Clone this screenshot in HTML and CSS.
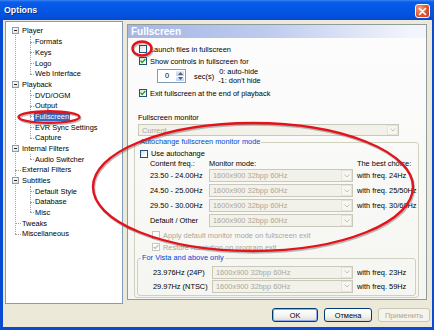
FILE: index.html
```html
<!DOCTYPE html>
<html lang="en">
<head>
  <meta charset="UTF-8"/>
  <title>Options</title>
  <link rel="stylesheet" href="styles.css">
</head>
<body>
  <div class="window">
    <div class="titlebar">
      <span class="title">Options</span>
      <span class="close">
        <svg width="9" height="9" viewBox="0 0 9 9"><path d="M1.5 1.5 L7.5 7.5 M7.5 1.5 L1.5 7.5" stroke="#fff" stroke-width="1.6" stroke-linecap="round"/></svg>
      </span>
    </div>

    <div class="client">
      <div class="main">
        <!-- Left tree -->
        <div class="tree">
          <ul class="root">
            <li>
              <div class="node parent"><span class="box"></span><span class="label">Player</span></div>
              <ul class="kids">
                <li><div class="node child"><span class="label">Formats</span></div></li>
                <li><div class="node child"><span class="label">Keys</span></div></li>
                <li><div class="node child"><span class="label">Logo</span></div></li>
                <li><div class="node child"><span class="label">Web Interface</span></div></li>
              </ul>
            </li>
            <li>
              <div class="node parent"><span class="box"></span><span class="label">Playback</span></div>
              <ul class="kids">
                <li><div class="node child"><span class="label">DVD/OGM</span></div></li>
                <li><div class="node child"><span class="label">Output</span></div></li>
                <li><div class="node child"><span class="label sel">Fullscreen</span></div></li>
                <li><div class="node child"><span class="label">EVR Sync Settings</span></div></li>
                <li><div class="node child"><span class="label">Capture</span></div></li>
              </ul>
            </li>
            <li>
              <div class="node parent"><span class="box"></span><span class="label">Internal Filters</span></div>
              <ul class="kids">
                <li><div class="node child"><span class="label">Audio Switcher</span></div></li>
              </ul>
            </li>
            <li><div class="node leaf"><span class="label">External Filters</span></div></li>
            <li>
              <div class="node parent"><span class="box"></span><span class="label">Subtitles</span></div>
              <ul class="kids">
                <li><div class="node child"><span class="label">Default Style</span></div></li>
                <li><div class="node child"><span class="label">Database</span></div></li>
                <li><div class="node child"><span class="label">Misc</span></div></li>
              </ul>
            </li>
            <li><div class="node leaf"><span class="label">Tweaks</span></div></li>
            <li><div class="node leaf"><span class="label">Miscellaneous</span></div></li>
          </ul>
        </div>

        <!-- Right page -->
        <div class="page">
          <div class="page-head">Fullscreen</div>

          <div class="opt launch"><span class="cb"></span>Launch files in fullscreen</div>
          <div class="opt show">
            <span class="cb"><svg width="6" height="6" viewBox="0 0 6 6"><path d="M0.6 2.8 L2.2 4.4 L5.4 1.1" fill="none" stroke="#21A121" stroke-width="1.4"/></svg></span>
            Show controls in fullscreen for
          </div>
          <div class="spin-row">
            <div class="spin">
              <span class="spin-val">0</span>
              <span class="spin-btns">
                <span class="sb"><svg width="5" height="3" viewBox="0 0 5 3"><path d="M0 3 L2.5 0 L5 3 Z" fill="#4D6185"/></svg></span>
                <span class="sb"><svg width="5" height="3" viewBox="0 0 5 3"><path d="M0 0 L2.5 3 L5 0 Z" fill="#4D6185"/></svg></span>
              </span>
            </div>
            <span class="secs">sec(s)</span>
            <div class="notes">
              <div class="note-a">0: auto-hide</div>
              <div>-1: don't hide</div>
            </div>
          </div>
          <div class="opt exit">
            <span class="cb"><svg width="6" height="6" viewBox="0 0 6 6"><path d="M0.6 2.8 L2.2 4.4 L5.4 1.1" fill="none" stroke="#21A121" stroke-width="1.4"/></svg></span>
            Exit fullscreen at the end of playback
          </div>

          <div class="mon-label">Fullscreen monitor</div>
          <div class="combo mon-combo"><span>Current</span><span class="arrow"><svg width="6" height="4" viewBox="0 0 6 4"><path d="M0.5 0.5 L3 3 L5.5 0.5" fill="none" stroke="#C4C2B6"/></svg></span></div>

          <fieldset class="grp outer">
            <legend>Autochange fullscreen monitor mode</legend>
            <div class="opt auto"><span class="cb"></span>Use autochange</div>

            <div class="modes">
              <span class="hd">Content freq.:</span>
              <span class="hd">Monitor mode:</span>
              <span class="hd note">The best choice:</span>

              <span>23.50 - 24.00Hz</span>
              <div class="combo row-combo"><span>1600x900 32bpp 60Hz</span><span class="arrow"><svg width="6" height="4" viewBox="0 0 6 4"><path d="M0.5 0.5 L3 3 L5.5 0.5" fill="none" stroke="#C4C2B6"/></svg></span></div>
              <span class="note">with freq. 24Hz</span>

              <span>24.50 - 25.00Hz</span>
              <div class="combo row-combo"><span>1600x900 32bpp 60Hz</span><span class="arrow"><svg width="6" height="4" viewBox="0 0 6 4"><path d="M0.5 0.5 L3 3 L5.5 0.5" fill="none" stroke="#C4C2B6"/></svg></span></div>
              <span class="note">with freq. 25/50Hz</span>

              <span>29.50 - 30.00Hz</span>
              <div class="combo row-combo"><span>1600x900 32bpp 60Hz</span><span class="arrow"><svg width="6" height="4" viewBox="0 0 6 4"><path d="M0.5 0.5 L3 3 L5.5 0.5" fill="none" stroke="#C4C2B6"/></svg></span></div>
              <span class="note">with freq. 30/60Hz</span>

              <span>Default / Other</span>
              <div class="combo row-combo"><span>1600x900 32bpp 60Hz</span><span class="arrow"><svg width="6" height="4" viewBox="0 0 6 4"><path d="M0.5 0.5 L3 3 L5.5 0.5" fill="none" stroke="#C4C2B6"/></svg></span></div>
              <span></span>
            </div>

            <div class="opt dis apply"><span class="cb"></span>Apply default monitor mode on fullscreen exit</div>
            <div class="opt dis restore">
              <span class="cb"><svg width="6" height="6" viewBox="0 0 6 6"><path d="M0.6 2.8 L2.2 4.4 L5.4 1.1" fill="none" stroke="#C4C2B6" stroke-width="1.4"/></svg></span>
              Restore resolution on program exit
            </div>

            <fieldset class="grp inner">
              <legend>For Vista and above only</legend>
              <div class="vista">
                <span>23.976Hz (24P)</span>
                <div class="combo row-combo"><span>1600x900 32bpp 60Hz</span><span class="arrow"><svg width="6" height="4" viewBox="0 0 6 4"><path d="M0.5 0.5 L3 3 L5.5 0.5" fill="none" stroke="#C4C2B6"/></svg></span></div>
                <span class="note">with freq. 23Hz</span>

                <span>29.97Hz (NTSC)</span>
                <div class="combo row-combo"><span>1600x900 32bpp 60Hz</span><span class="arrow"><svg width="6" height="4" viewBox="0 0 6 4"><path d="M0.5 0.5 L3 3 L5.5 0.5" fill="none" stroke="#C4C2B6"/></svg></span></div>
                <span class="note">with freq. 59Hz</span>
              </div>
            </fieldset>
          </fieldset>
        </div>
      </div>

      <div class="buttons">
        <span class="btn ok">OK</span>
        <span class="btn cancel">Отмена</span>
        <span class="btn apply">Применить</span>
      </div>
    </div>

    <!-- red hand-drawn marks over the screenshot -->
    <svg class="marks" width="434" height="330" viewBox="0 0 434 330">
      <g fill="none" stroke="#444" stroke-opacity="0.35" stroke-width="2.4" transform="translate(1 1.5)">
        <ellipse cx="49" cy="117" rx="30.5" ry="5.8"/>
        <ellipse cx="142" cy="48.5" rx="9.5" ry="7"/>
        <ellipse cx="253" cy="187" rx="160" ry="64"/>
      </g>
      <g fill="none" stroke="#E3121B" stroke-width="2.4">
        <ellipse cx="49" cy="117" rx="30.5" ry="5.8"/>
        <ellipse cx="142" cy="48.5" rx="9.5" ry="7"/>
        <ellipse cx="253" cy="187" rx="160" ry="64"/>
      </g>
    </svg>
  </div>
</body>
</html>
```

FILE: styles.css
```css
/* Reset & Base */
*, *::before, *::after { margin:0; padding:0; box-sizing:border-box; }
body {
  font-family: "Liberation Sans", Arial, sans-serif;
  font-size: 7.4px;
  color: #000;
  background: #fff;
}
ul { list-style: none; }

/* Window frame */
.window {
  position: relative;
  width: 434px;
  height: 330px;
  display: flex;
  flex-direction: column;
  background: #0A4BD4;
  overflow: hidden;
}
.titlebar {
  height: 20px;
  flex: none;
  display: flex;
  align-items: center;
  justify-content: space-between;
  padding: 0 4px;
  background: linear-gradient(#3A86F6 0, #0A5DE8 2px, #0557E6 40%, #0451DD 80%, #0348D2 100%);
}
.title {
  color: #fff;
  font-weight: bold;
  font-size: 8.8px;
  text-shadow: 1px 1px 0 #0A2A8C;
}
.close {
  width: 15px;
  height: 14px;
  margin-top: 2px;
  border: 1px solid #fff;
  border-radius: 3px;
  background: radial-gradient(circle at 30% 30%, #F4A182, #E0552D 55%, #C2401A);
  display: flex;
  align-items: center;
  justify-content: center;
}
.client {
  flex: 1;
  margin: 0 2px 3px 3px;
  padding: 1px 2px 0 2px;
  background: #ECE9D8;
  display: flex;
  flex-direction: column;
}
.main {
  display: flex;
  align-items: flex-start;
}

/* Tree */
.tree {
  width: 118px;
  height: 283px;
  border: 1px solid #7F9DB9;
  background: #fff;
  padding-top: 3.66px;
}
.root, .kids { position: relative; }
.root::before {
  content: "";
  position: absolute;
  left: 9px;
  top: 5.34px;
  bottom: 5.34px;
  border-left: 1px dotted #A0A0A0;
}
.kids::before {
  content: "";
  position: absolute;
  left: 24px;
  top: 0;
  bottom: 5.34px;
  border-left: 1px dotted #A0A0A0;
}
.node {
  position: relative;
  height: 10.68px;
  display: flex;
  align-items: center;
  white-space: nowrap;
}
.node.parent { padding-left: 6px; }
.node.leaf { padding-left: 15px; }
.node.child { padding-left: 28px; }
.node.leaf::before, .node.child::before {
  content: "";
  position: absolute;
  top: 50%;
  border-top: 1px dotted #A0A0A0;
}
.node.leaf::before { left: 9px; width: 6px; }
.node.child::before { left: 24px; width: 4px; }
.box {
  position: relative;
  width: 7px;
  height: 7px;
  margin-right: 2px;
  border: 1px solid #8C9CB4;
  background: linear-gradient(#222, #222) center / 3px 1px no-repeat, linear-gradient(135deg, #fff, #E2DFD6);
}
.label {
  padding: 0 1px;
  line-height: 9px;
}
.label.sel {
  background: #316AC5;
  color: #fff;
}

/* Page */
.page {
  width: 300px;
  height: 276px;
  margin: 3px 0 0 4px;
  border: 1px solid #919B9C;
  background: linear-gradient(#FDFDFE, #F5F5F1);
  overflow: hidden;
}
.page-head {
  height: 13px;
  line-height: 13px;
  padding-left: 3px;
  color: #fff;
  font-weight: bold;
  font-size: 10px;
  background: linear-gradient(90deg, #A5B6E3, #BCCAEE 45%, #F3F5FC 95%);
}
.opt {
  display: flex;
  align-items: center;
  gap: 3px;
  height: 11px;
  margin-left: 11px;
  white-space: nowrap;
}
.launch { margin-top: 5.5px; }
.show { margin-top: 1px; }
.exit { margin-top: 4.5px; }
.cb {
  flex: none;
  width: 8px;
  height: 8px;
  border: 1px solid #1C5180;
  background: linear-gradient(135deg, #DCDCD7, #fff 80%);
  display: flex;
  align-items: center;
  justify-content: center;
}
.opt.dis { color: #ACA899; }
.opt.dis .cb { border-color: #C9C7BA; background: #fff; }

.spin-row {
  display: flex;
  align-items: center;
  height: 14px;
  margin: 2.5px 0 0 29px;
}
.spin {
  width: 29px;
  height: 14px;
  border: 1px solid #7F9DB9;
  background: #fff;
  display: flex;
}
.spin-val {
  flex: 1;
  text-align: center;
  line-height: 12px;
}
.spin-btns {
  width: 9px;
  padding: 1px 1px 1px 0;
  display: flex;
  flex-direction: column;
  gap: 1px;
}
.sb {
  flex: 1;
  border-radius: 1px;
  background: linear-gradient(#E2EAFD, #B9CBF3);
  display: flex;
  align-items: center;
  justify-content: center;
}
.secs { margin-left: 8px; }
.notes {
  margin-left: 4px;
  line-height: 9px;
}
.note-a { padding-left: 1px; }

.mon-label {
  margin: 13px 0 0 10px;
  height: 11px;
  line-height: 11px;
}
.combo {
  display: flex;
  align-items: center;
  height: 12px;
  padding-left: 3px;
  border: 1px solid #CAC8BB;
  background: #F2F1EA;
  color: #ACA899;
  white-space: nowrap;
}
.combo .arrow {
  margin-left: auto;
  width: 11px;
  height: 100%;
  border: 1px solid #E6E4DA;
  background: #F7F6F1;
  display: flex;
  align-items: center;
  justify-content: center;
}
.mon-combo {
  width: 261px;
  margin: 1.5px 0 0 10px;
}

/* Group boxes */
.grp {
  min-width: 0;
  border: 1px solid #D0D0BF;
  border-radius: 3px;
}
.grp legend {
  color: #0046D5;
  line-height: 10px;
  padding: 0 1px;
}
.grp.outer {
  width: 285px;
  margin: 1px 0 0 6px;
}
.grp.outer > legend { margin-left: 4px; }
.opt.auto { margin: 1.5px 0 0 5px; height: 10px; }

.modes {
  display: grid;
  grid-template-columns: 59px 146px 1fr;
  grid-template-rows: 8px repeat(4, 15px);
  align-items: center;
  margin: 1.5px 0 0 15px;
  white-space: nowrap;
}
.hd { line-height: 8px; }
.row-combo {
  width: 144px;
  height: 13px;
}
.modes .note { padding-left: 2px; }
.opt.apply { margin: 2px 0 0 17px; height: 10px; }
.opt.restore { margin: 2px 0 0 17px; height: 10px; }

.grp.inner {
  width: 279px;
  margin: 1px 0 1px 2px;
  padding-bottom: 2px;
}
.grp.inner > legend { margin-left: 3px; }
.vista {
  display: grid;
  grid-template-columns: 59px 145px 1fr;
  grid-template-rows: repeat(2, 14px);
  align-items: center;
  margin: 2px 0 0 15px;
  white-space: nowrap;
}
.vista .row-combo { width: 141px; }

/* Buttons */
.buttons {
  display: flex;
  justify-content: flex-end;
  gap: 6px;
  margin-top: 4px;
}
.btn {
  height: 14px;
  border: 1px solid #003C74;
  border-radius: 3px;
  background: linear-gradient(#fff, #F3F3EF 60%, #E3E1D8 90%, #D6D0C5);
  display: flex;
  align-items: center;
  justify-content: center;
}
.btn.ok { width: 46px; box-shadow: inset 0 0 0 1px #8FB0EA; }
.btn.cancel { width: 48px; }
.btn.apply {
  width: 52px;
  border-color: #C9C7BA;
  background: #F5F4EA;
  color: #ACA899;
}

/* Annotation overlay */
.marks {
  position: absolute;
  left: 0;
  top: 0;
  pointer-events: none;
}
```
